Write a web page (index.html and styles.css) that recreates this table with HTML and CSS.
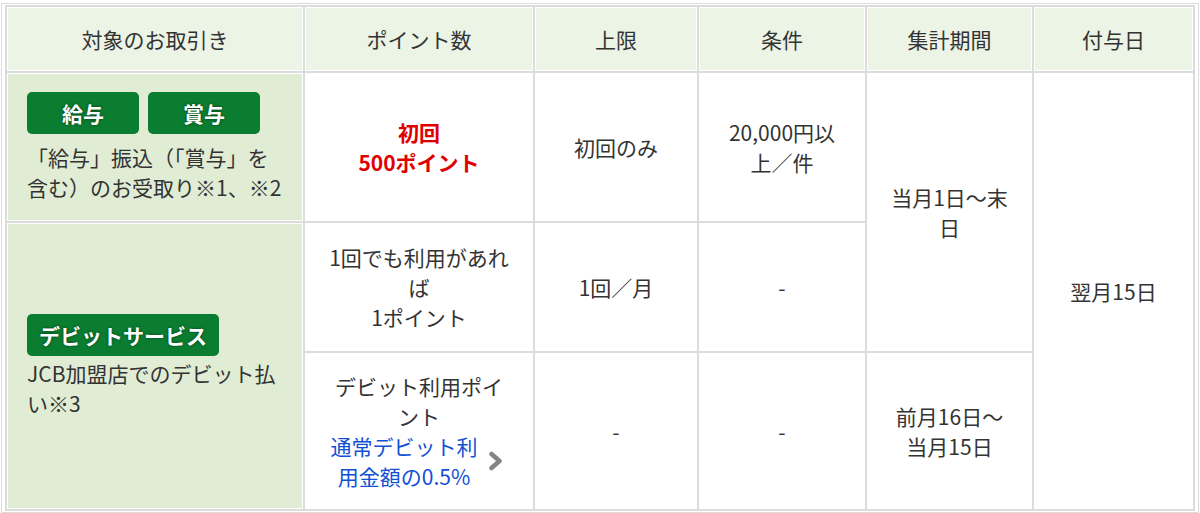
FILE: index.html
```html
<!DOCTYPE html>
<html lang="ja">
<head>
<meta charset="utf-8">
<title>ポイント付与条件</title>
<link rel="stylesheet" href="styles.css">
</head>
<body>
<div class="frame">
  <table class="points">
    <colgroup>
      <col class="c1"><col class="c2"><col class="c3"><col class="c4"><col class="c5"><col class="c6">
    </colgroup>
    <thead>
      <tr class="r-head">
        <th>対象のお取引き</th>
        <th>ポイント数</th>
        <th>上限</th>
        <th>条件</th>
        <th>集計期間</th>
        <th>付与日</th>
      </tr>
    </thead>
    <tbody>
      <tr class="r1">
        <td class="target">
          <div class="badges"><span class="badge wide">給与</span><span class="badge wide">賞与</span></div>
          <p class="desc">「給与」振込（「賞与」を<br>含む）のお受取り※1、※2</p>
        </td>
        <td><strong class="red">初回<br>500ポイント</strong></td>
        <td>初回のみ</td>
        <td>20,000円以<br>上／件</td>
        <td rowspan="2">当月1日〜末<br>日</td>
        <td rowspan="3">翌月15日</td>
      </tr>
      <tr class="r2">
        <td class="target" rowspan="2">
          <div class="badges tight"><span class="badge">デビットサービス</span></div>
          <p class="desc">JCB加盟店でのデビット払<br>い※3</p>
        </td>
        <td>1回でも利用があれ<br>ば<br>1ポイント</td>
        <td>1回／月</td>
        <td>-</td>
      </tr>
      <tr class="r3">
        <td>
          デビット利用ポイ<br>ント
          <a class="more" href="#">
            <span class="more-text">通常デビット利<br>用金額の0.5%</span>
            <svg class="chev" width="16" height="20" viewBox="0 0 16 20" aria-hidden="true"><polyline points="3.5,3 11.5,10 3.5,17" fill="none" stroke="#858585" stroke-width="4.5" stroke-linejoin="round" stroke-linecap="round"/></svg>
          </a>
        </td>
        <td>-</td>
        <td>-</td>
        <td>前月16日〜<br>当月15日</td>
      </tr>
    </tbody>
  </table>
</div>
</body>
</html>
```

FILE: styles.css
```css
html, body {
  margin: 0;
  padding: 0;
  background: #fff;
}

body {
  font-family: "Noto Sans CJK JP", "Noto Sans", "Liberation Sans", sans-serif;
  color: #333;
  font-size: 21px;
  line-height: 30px;
}

.frame {
  margin: 3px 0 0 1px;
  width: 1190px;
  border: 1px solid #dcdcdc;
  padding: 1px 3px 1px 3px;
  background: #fff;
}

.points {
  width: 1190px;
  table-layout: fixed;
  border-collapse: separate;
  border-spacing: 2px;
  background: #dcdcdc;
}

.c1 { width: 296px; }
.c2 { width: 228px; }
.c3 { width: 162px; }
.c4 { width: 166px; }
.c5 { width: 165px; }
.c6 { width: 159px; }

.points th,
.points td {
  border: 1px solid #fff;
  background: #fff;
  text-align: center;
  vertical-align: middle;
  padding: 0 10px;
  font-weight: normal;
}

.points th {
  background: #ebf4e5;
}

.r-head { height: 64px; }
.r1 { height: 148px; }
.r2 { height: 128px; }
.r3 { height: 156px; }

.points td.target {
  background: #e0edd4;
  text-align: left;
  padding: 0 18px 0 19px;
}

.badges {
  display: flex;
  gap: 9px;
  margin-bottom: 8px;
}

.badges.tight {
  margin-bottom: 2px;
}

.badge {
  display: inline-block;
  height: 42px;
  line-height: 42px;
  padding: 0 12px;
  border-radius: 5px;
  background: #0a7d31;
  color: #fff;
  font-weight: bold;
  font-size: 21px;
  text-shadow: 0 0 3px rgba(0, 0, 0, 0.55);
}

.badge.wide {
  width: 112px;
  padding: 0;
  text-align: center;
  box-sizing: border-box;
}

.desc {
  margin: 0;
}

.red {
  color: #e10000;
  font-weight: bold;
}

.more {
  display: flex;
  align-items: center;
  justify-content: center;
  gap: 10px;
  margin-left: -4px;
  color: #1250d4;
  text-decoration: none;
}

.more-text {
  display: block;
  text-align: center;
}

.chev {
  flex: none;
  filter: blur(0.6px);
}
```
